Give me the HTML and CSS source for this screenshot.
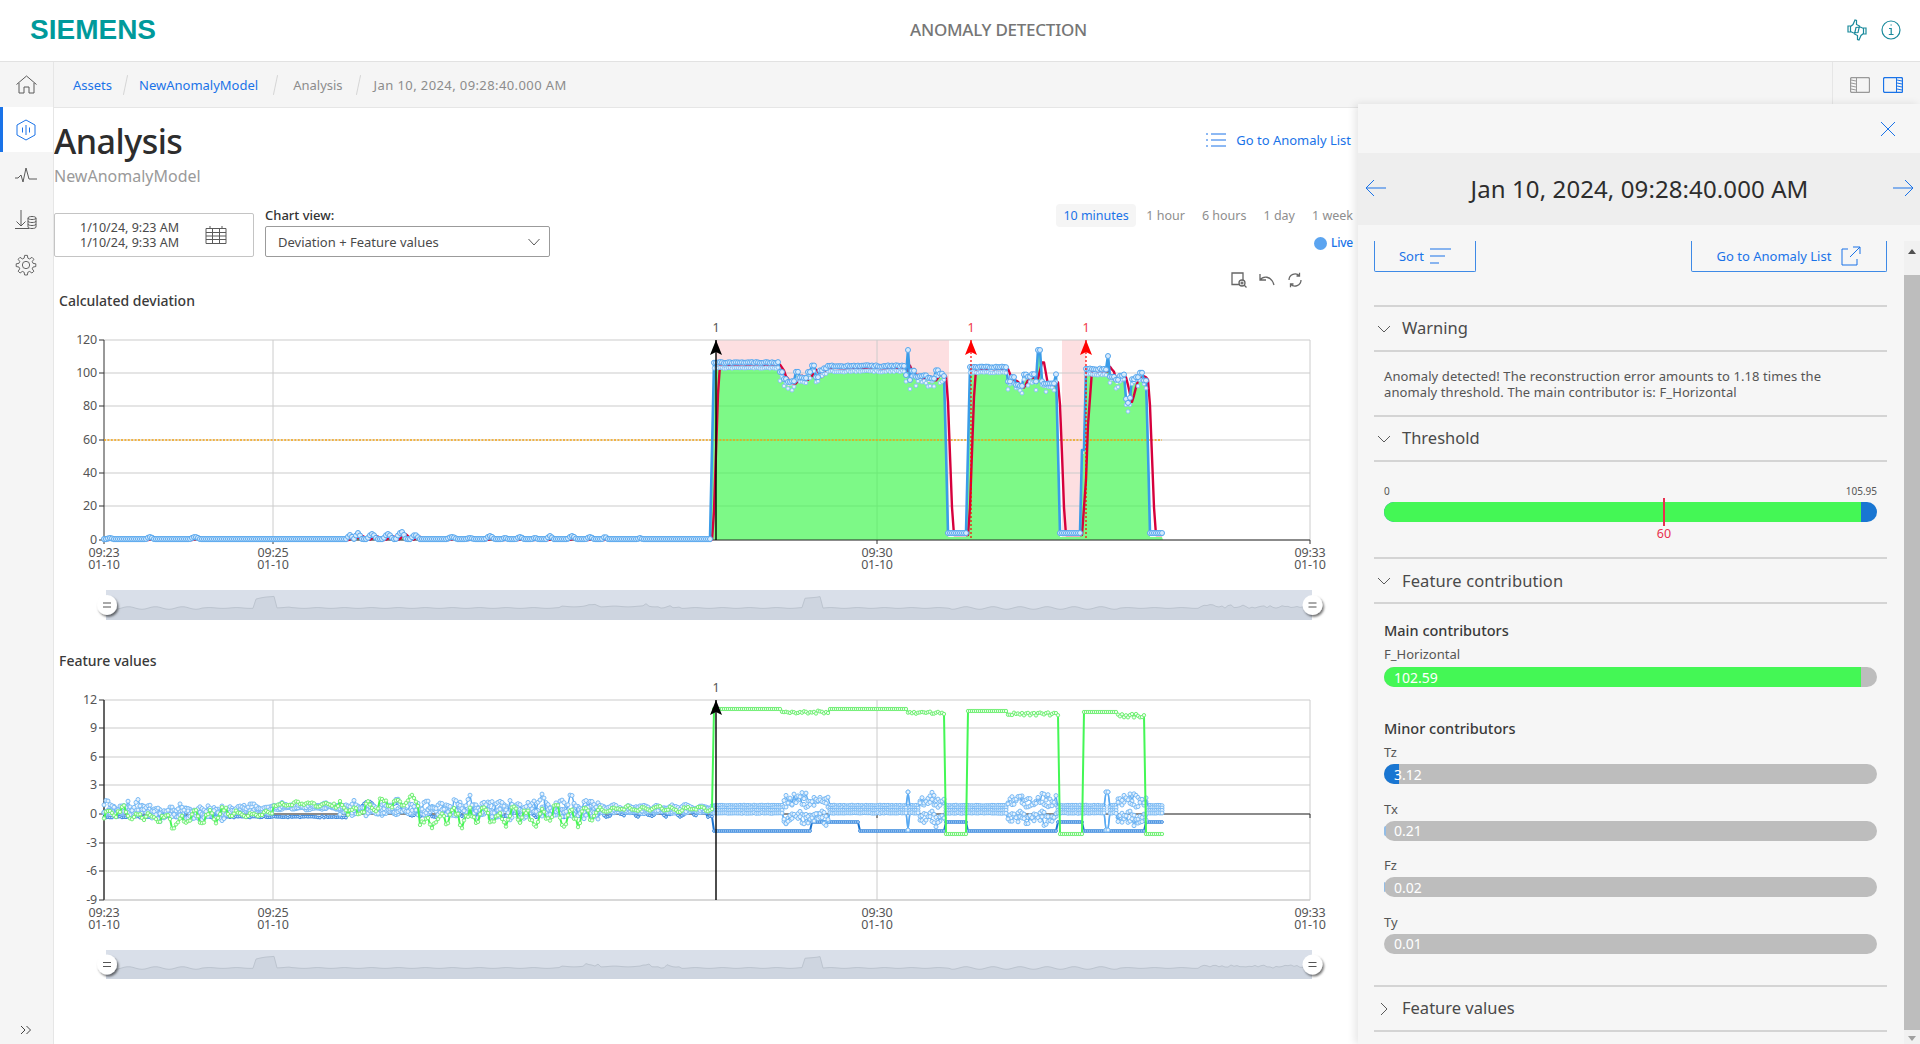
FILE: index.html
```html
<!DOCTYPE html>
<html lang="en">
<head>
<meta charset="utf-8">
<title>Anomaly Detection</title>
<link rel="stylesheet" href="styles.css">
</head>
<body>
<header class="topbar">
  <div class="logo">SIEMENS</div>
  <div class="app-title">ANOMALY DETECTION</div>
  <div class="top-icons">
    <svg class="ico-teal" width="20" height="22" viewBox="0 0 20 22"><path d="M1 7h2.500v6H1zM3.500 7.500 6 5.500 8 1l1.500.5v4l3 1.500L11 13.500l-4.500.5-3-1.500zM16.500 9H19v6h-2.500zM16.500 14.500 14 16.500 12 21l-1.500-.5v-4l-3-1.500L9 8.500l4.500-.5 3 1.500z"/></svg>
    <svg class="ico-teal" width="20" height="20" viewBox="0 0 20 20"><circle cx="10" cy="10" r="9"/><path d="M8 8.500h2.200v6M7.800 14.500h4.800M9.500 5h1.300"/></svg>
  </div>
</header>
<div class="shell">
  <nav class="sidebar">
    <a class="nav-item"><svg class="ico-gray" width="21" height="19" viewBox="0 0 21 19"><path d="M.5 9.500 10.500 1l10 8.500M3 8v10h5v-6h5v6h5V8"/></svg></a>
    <a class="nav-item active"><svg class="ico-blue" width="20" height="22" viewBox="0 0 20 22"><path d="M10 1l9 5v10l-9 5-9-5V6zM6.500 8.500v5M10 6v10M13.500 8.500v5"/></svg></a>
    <a class="nav-item"><svg class="ico-gray" width="22" height="16" viewBox="0 0 22 16"><path d="M0 11h3l3-3 2 7 3-14 3 11h8"/></svg></a>
    <a class="nav-item"><svg class="ico-gray" width="22" height="20" viewBox="0 0 22 20"><path d="M6 0v16M1.500 11.500 6 16l4.500-4.500M0 18.500h14M13 8c0-2 8-2 8 0v9c0 2-8 2-8 0zM13 8c0 2 8 2 8 0M13 11c0 2 8 2 8 0M13 14c0 2 8 2 8 0"/></svg></a>
    <a class="nav-item"><svg class="ico-gray" width="22" height="22" viewBox="0 0 24 24"><path d="M10.500 1.500h3l.5 3 2 .9 2.500-1.800 2.100 2.100-1.800 2.500.9 2 3 .5v3l-3 .5-.9 2 1.800 2.500-2.100 2.100-2.500-1.800-2 .9-.5 3h-3l-.5-3-2-.9-2.500 1.800-2.100-2.100 1.800-2.500-.9-2-3-.5v-3l3-.5.9-2-1.800-2.500 2.100-2.100 2.500 1.800 2-.9z"/><circle cx="12" cy="12" r="4"/></svg></a>
    <a class="nav-expand"><svg class="ico-dark" width="12" height="10" viewBox="0 0 12 10"><path d="M1 1l4 4-4 4M6.500 1l4 4-4 4"/></svg></a>
  </nav>
  <main class="main">
    <div class="breadcrumb">
      <a class="crumb link">Assets</a><span class="sep tight"></span>
      <a class="crumb link">NewAnomalyModel</a><span class="sep wide"></span>
      <span class="crumb">Analysis</span><span class="sep"></span>
      <span class="crumb date">Jan 10, 2024, 09:28:40.000 AM</span>
      <div class="layout-icons">
        <svg width="20" height="16" viewBox="0 0 20 16"><rect class="frame-gray" x=".5" y=".5" width="19" height="15" rx="1.500"/><path class="hatch-gray" d="M6.500 1v14M1 3l5 1M1 6l5 1M1 9l5 1M1 12l5 1"/></svg>
        <svg width="20" height="16" viewBox="0 0 20 16"><rect class="frame-blue" x=".5" y=".5" width="19" height="15" rx="1.500"/><path class="hatch-blue" d="M13.500 1v14M14 3l5 1M14 6l5 1M14 9l5 1M14 12l5 1"/></svg>
      </div>
    </div>
    <div class="content">
      <div class="title-row">
        <div>
          <h1>Analysis</h1>
          <div class="subtitle">NewAnomalyModel</div>
        </div>
        <a class="list-link">
          <svg class="ico-blue" width="20" height="14" viewBox="0 0 20 14"><path d="M5 1h15M5 7h15M5 13h15M0 1h2M0 7h2M0 13h2"/></svg>
          Go to Anomaly List
        </a>
      </div>
      <div class="controls">
        <div class="date-box">
          <div class="dates"><div>1/10/24, 9:23 AM</div><div>1/10/24, 9:33 AM</div></div>
          <svg class="ico-gray" width="22" height="20" viewBox="0 0 22 20"><path d="M1 3.500h20v15H1zM1 7.500h20M1 11h20M1 14.500h20M7.500 3.500v15M14.500 3.500v15M5 1v2.500M17 1v2.500"/></svg>
        </div>
        <div class="select-wrap">
          <label class="select-label">Chart view:</label>
          <div class="select"><span>Deviation + Feature values</span>
            <svg class="ico-gray" width="12" height="8" viewBox="0 0 12 8"><path d="M.5 1l5.500 6 5.500-6"/></svg>
          </div>
        </div>
        <div class="range-col">
          <div class="ranges">
            <span class="range on">10 minutes</span>
            <span class="range">1 hour</span>
            <span class="range">6 hours</span>
            <span class="range">1 day</span>
            <span class="range">1 week</span>
          </div>
          <div class="live"><i class="live-dot"></i>Live</div>
        </div>
      </div>
      <div class="chart-tools">
        <svg class="ico-tool" width="16" height="16" viewBox="0 0 16 16"><path d="M9 12.500H1V1h11v7"/><circle cx="11" cy="11" r="3"/><path d="M13 13l2.500 2.500M9.500 11h3M11 9.500v3"/></svg>
        <svg class="ico-tool" width="16" height="14" viewBox="0 0 16 14"><path d="M1 1v6h6M1 7c3-4 11-5 14 5"/></svg>
        <svg class="ico-tool" width="16" height="16" viewBox="0 0 16 16"><path d="M2 8a6 6 0 0 1 10.500-4M14 8a6 6 0 0 1-10.500 4M12.500 .8V4H9.500M3.500 15.200V12h3"/></svg>
      </div>
      <h3 class="chart-title">Calculated deviation</h3>
      <svg class="chart" id="chart-dev" width="1300" height="315" viewBox="54 315 1300 315"></svg>
      <h3 class="chart-title second">Feature values</h3>
      <svg class="chart" id="chart-feat" width="1300" height="315" viewBox="54 675 1300 315"></svg>
    </div>
  </main>
  <aside class="panel">
    <div class="panel-close"><svg class="ico-blue" width="16" height="16" viewBox="0 0 16 16"><path d="M1 1l14 14M15 1 1 15"/></svg></div>
    <div class="panel-title">
      <svg class="ico-blue" width="22" height="18" viewBox="0 0 22 18"><path d="M21 9H1M9 1 1 9l8 8"/></svg>
      <span>Jan 10, 2024, 09:28:40.000 AM</span>
      <svg class="ico-blue" width="22" height="18" viewBox="0 0 22 18"><path d="M1 9h20M13 1l8 8-8 8"/></svg>
    </div>
    <div class="panel-scroll">
      <div class="panel-body">
        <div class="panel-toolbar">
          <a class="btn btn-sort">Sort
            <svg class="ico-blue" width="21" height="16" viewBox="0 0 21 16"><path d="M0 1h21M0 8h15M0 15h9"/></svg>
          </a>
          <a class="btn btn-go">Go to Anomaly List
            <svg class="ico-blue" width="20" height="20" viewBox="0 0 20 20"><path d="M7 3H1v16h15v-6M9 11 19 1M12 1h7v7"/></svg>
          </a>
        </div>
        <div class="sec-head first"><svg class="ico-gray" width="14" height="8" viewBox="0 0 14 8"><path d="M1 1l6 6 6-6"/></svg>Warning</div>
        <p class="warning-text">Anomaly detected! The reconstruction error amounts to 1.18 times the anomaly threshold. The main contributor is: F_Horizontal</p>
        <div class="sec-head"><svg class="ico-gray" width="14" height="8" viewBox="0 0 14 8"><path d="M1 1l6 6 6-6"/></svg>Threshold</div>
        <div class="threshold">
          <div class="threshold-scale"><span>0</span><span>105.95</span></div>
          <div class="bar blue-bg">
            <div class="bar-fill green" style="width:96.8%"></div>
            <i class="tick"></i><span class="tick-label">60</span>
          </div>
        </div>
        <div class="sec-head feature-head"><svg class="ico-gray" width="14" height="8" viewBox="0 0 14 8"><path d="M1 1l6 6 6-6"/></svg>Feature contribution</div>
        <div class="contrib">
          <h4>Main contributors</h4>
          <div class="c-row main-row"><div class="c-label">F_Horizontal</div>
            <div class="bar"><div class="bar-fill green" style="width:96.8%"></div><span class="bar-value">102.59</span></div></div>
          <h4 class="minor">Minor contributors</h4>
          <div class="c-row"><div class="c-label">Tz</div>
            <div class="bar"><div class="bar-fill blue" style="width:3%"></div><span class="bar-value">3.12</span></div></div>
          <div class="c-row"><div class="c-label">Tx</div>
            <div class="bar"><div class="bar-fill faint" style="width:.4%"></div><span class="bar-value">0.21</span></div></div>
          <div class="c-row"><div class="c-label">Fz</div>
            <div class="bar"><div class="bar-fill faint" style="width:.3%"></div><span class="bar-value">0.02</span></div></div>
          <div class="c-row"><div class="c-label">Ty</div>
            <div class="bar"><span class="bar-value">0.01</span></div></div>
        </div>
        <div class="sec-head"><svg class="ico-gray" width="8" height="14" viewBox="0 0 8 14"><path d="M1 1l6 6-6 6"/></svg>Feature values</div>
      </div>
      <div class="scrollbar">
        <i class="arrow-up"></i>
        <div class="thumb"></div>
        <i class="arrow-down"></i>
      </div>
    </div>
  </aside>
</div>
<script src="charts.js"></script>
</body>
</html>
```
FILE: styles.css
```css
* { box-sizing: border-box; }
html, body { margin: 0; height: 100%; overflow: hidden; }
body { font-family: "Noto Sans", "Liberation Sans", sans-serif; color: #333; background: #fff; font-size: 12px; }
svg { flex: none; display: block; }
a { text-decoration: none; }

.ico-teal, .ico-gray, .ico-blue, .ico-dark, .ico-tool { fill: none; stroke-width: 1; }
.ico-teal { stroke: #1a8a9c; stroke-width: 1.200; }
.ico-gray { stroke: #5a5a5a; }
.ico-blue { stroke: #1a73e8; }
.ico-dark { stroke: #444; }
.ico-tool { stroke: #666; stroke-width: 1.300; }

.topbar { height: 62px; display: flex; align-items: center; position: relative; border-bottom: 1px solid #e2e2e2; background: #fff; padding: 0 19px 2px 30px; }
.logo { font-family: "Liberation Sans", sans-serif; font-weight: 700; font-size: 28px; color: #009a9b; line-height: 1; }
.app-title { flex: 1; text-align: center; font-size: 17px; font-weight: 500; color: #767676; margin-right: 6px; letter-spacing: -.25px; }
.top-icons { display: flex; gap: 14px; align-items: center; }

.shell { display: flex; height: 982px; position: relative; }
.sidebar { width: 54px; background: #f5f5f5; border-right: 1px solid #e6e6e6; position: relative; flex: none; }
.nav-item { height: 45px; display: flex; align-items: center; justify-content: center; border-left: 3px solid transparent; padding-right: 4px; }
.nav-item.active { background: #fff; border-left-color: #1a73e8; }
.nav-expand { position: absolute; left: 0; right: 2px; bottom: 9px; display: flex; justify-content: center; }

.main { flex: 1; min-width: 0; }
.breadcrumb { height: 46px; background: #f5f5f5; border-bottom: 1px solid #e6e6e6; display: flex; align-items: center; padding-left: 19px; font-size: 13px; position: relative; }
.crumb { color: #8c8c8c; }
.crumb.link { color: #1a73e8; }
.crumb.date { letter-spacing: .4px; }
.sep { width: 1px; height: 20px; background: #d6d6d6; margin: 0 15px; transform: rotate(12deg); }
.sep.tight { margin: 0 13px; }
.sep.wide { margin: 0 17px; }
.layout-icons { margin-left: auto; display: flex; gap: 13px; height: 100%; align-items: center; padding: 0 17px; border-left: 1px solid #e6e6e6; width: 88px; }
.frame-gray, .hatch-gray { fill: none; stroke: #999; }
.frame-blue, .hatch-blue { fill: none; stroke: #1a73e8; }
.frame-gray, .frame-blue { stroke-width: 1.300; }

.content { width: 1300px; padding-top: 13px; }
.title-row { display: flex; justify-content: space-between; align-items: flex-start; height: 84px; }
h1 { margin: 0; font-size: 34px; line-height: 40px; font-weight: 500; color: #2d2d2d; letter-spacing: -.5px; }
.subtitle { margin-top: 5px; font-size: 16px; line-height: 20px; color: #9a9a9a; }
.list-link { display: flex; align-items: center; gap: 10px; color: #1a73e8; font-size: 13px; line-height: 20px; margin-top: 9px; padding-right: 3px; }

.controls { display: flex; align-items: flex-end; height: 52px; }
.date-box { width: 200px; height: 44px; border: 1px solid #c4c4c4; border-radius: 2px; display: flex; align-items: center; justify-content: space-between; padding: 0 26px 0 25px; font-size: 12.500px; line-height: 15px; color: #4a4a4a; text-align: center; }
.select-wrap { margin-left: 11px; width: 285px; }
.select-label { display: block; font-size: 13px; line-height: 16px; color: #333; font-weight: 500; margin-bottom: 3px; }
.select { height: 31px; border: 1px solid #9b9b9b; border-radius: 2px; display: flex; align-items: center; justify-content: space-between; padding: 0 9px 0 12px; font-size: 13px; color: #4a4a4a; }
.range-col { margin-left: auto; align-self: flex-start; display: flex; flex-direction: column; align-items: flex-end; padding-right: 1px; }
.ranges { display: flex; font-size: 12.500px; align-items: center; height: 23px; margin-top: -1px; }
.range { padding: 0 8.500px; color: #8e8e8e; height: 23px; line-height: 23px; border-radius: 4px; }
.range:last-child { padding-right: 0; }
.range.on { color: #1a73e8; background: #f5f5f5; padding: 0 7px; margin-right: 2px; }
.live { display: flex; align-items: center; gap: 4px; color: #1a73e8; font-size: 12px; line-height: 16px; margin-top: 8px; font-weight: 500; letter-spacing: -.2px; }
.live-dot { width: 13px; height: 13px; border-radius: 50%; background: #5ba4f0; }
.chart-tools { display: flex; gap: 12px; justify-content: flex-end; align-items: center; height: 16px; margin-top: 15px; padding-right: 51px; }

.chart-title { margin: 3px 0 4px 5px; font-size: 14px; line-height: 20px; font-weight: 500; color: #3a3a3a; }
.chart-title.second { margin-top: 21px; }
.chart text { font-family: "Noto Sans", "Liberation Sans", sans-serif; font-size: 12.500px; fill: #555; letter-spacing: -.2px; }
.chart text.red { fill: #f03a4a; }

.panel { position: absolute; left: 1358px; right: 0; top: 42px; bottom: 0; background: #f6f6f6; box-shadow: -3px 0 8px rgba(0,0,0,.1); display: flex; flex-direction: column; }
.panel-close { height: 49px; display: flex; justify-content: flex-end; align-items: center; padding-right: 24px; }
.panel-title { height: 72px; background: #eeeeee; display: flex; align-items: center; justify-content: space-between; padding: 0 6px 2px 7px; font-size: 24px; color: #2d2d2d; letter-spacing: .1px; }
.panel-scroll { flex: 1; display: flex; margin-top: 16px; min-height: 0; }
.panel-body { flex: 1; padding: 0 17px 0 16px; min-width: 0; }
.panel-toolbar { display: flex; justify-content: space-between; height: 31px; margin-bottom: 33px; }
.btn { display: flex; align-items: center; justify-content: center; gap: 10px; height: 31px; border: 1px solid #3e8ae6; border-top: 0; border-radius: 0 0 2px 2px; color: #1a73e8; font-size: 13px; }
.btn-sort { width: 102px; gap: 6px; padding-left: 0; }
.btn-go { width: 196px; }
.sec-head { height: 47px; border-top: 2px solid #d4d4d4; border-bottom: 2px solid #d4d4d4; display: flex; align-items: center; font-size: 16.500px; color: #4a4a4a; position: relative; padding: 0 0 2px 28px; }
.sec-head.feature-head { padding-bottom: 0; letter-spacing: .1px; }
.sec-head svg { position: absolute; left: 3px; top: 18px; }
.sec-head svg[width="8"] { left: 6px; top: 15px; }
.warning-text { margin: 0; padding: 16px 40px 15px 10px; font-size: 13px; line-height: 16px; color: #555; height: 63px; letter-spacing: .1px; }
.threshold { padding: 23px 10px 0; height: 95px; }
.threshold-scale { display: flex; justify-content: space-between; font-size: 10px; line-height: 12px; color: #555; margin-bottom: 5px; }
.bar { height: 20px; border-radius: 10px; background: #bdbdbd; position: relative; display: flex; align-items: center; overflow: visible; }
.bar.blue-bg { background: #1976d2; }
.bar-fill { position: absolute; left: 0; top: 0; bottom: 0; border-radius: 10px 0 0 10px; }
.bar-fill.green { background: #44f755; }
.bar-fill.blue { background: #1976d2; }
.bar-fill.faint { background: #93bde6; border-radius: 2px 0 0 2px; top: 5px; bottom: 5px; }
.bar-value { position: relative; margin-left: 10px; color: #fff; font-size: 14px; }
.tick { position: absolute; left: 279px; top: -4px; width: 2px; height: 28px; background: #e8304f; }
.tick-label { position: absolute; left: 270px; top: 24px; width: 20px; text-align: center; font-size: 12.500px; line-height: 16px; color: #e8304f; }
.contrib { padding: 16px 10px 0; height: 381px; }
h4 { margin: 0; font-size: 14.500px; line-height: 20px; font-weight: 500; color: #3a3a3a; }
h4.minor { margin-top: 31px; }
.c-label { font-size: 13px; line-height: 16px; color: #555; margin-bottom: 4px; }
.main-row .c-label { margin-bottom: 5px; }
.c-row { margin-top: 16.600px; }
h4 + .c-row { margin-top: 6px; }
.scrollbar { width: 16px; position: relative; background: #f1f1f1; }
.thumb { position: absolute; left: 0; right: 0; top: 34px; bottom: 14px; background: #bdbdbd; }
.arrow-up, .arrow-down { position: absolute; left: 4px; width: 0; height: 0; border-left: 4px solid transparent; border-right: 4px solid transparent; }
.arrow-up { top: 8px; border-bottom: 5px solid #505050; }
.arrow-down { bottom: 3px; border-top: 5px solid #a0a0a0; }
```
FILE: charts.js
```js
(function () {
  var NS = 'http://www.w3.org/2000/svg';
  var seed = 4711;
  function rnd() { seed = (seed * 16807) % 2147483647; return seed / 2147483647; }
  function noise() { return rnd() * 2 - 1; }
  function add(p, name, attrs, text) {
    var e = document.createElementNS(NS, name);
    for (var k in attrs) e.setAttribute(k, attrs[k]);
    if (text !== undefined) e.textContent = text;
    p.appendChild(e);
    return e;
  }
  var GRID = '#cccccc', AXIS = '#333333';
  var X0 = 104, X1 = 1310, END = 1163;

  function frame(svg, c) {
    c.yTicks.forEach(function (t) {
      add(svg, 'line', { x1: X0, x2: X1, y1: t[1], y2: t[1], stroke: GRID, 'stroke-width': 1.2 });
      add(svg, 'line', { x1: X0 - 5, x2: X0, y1: t[1], y2: t[1], stroke: AXIS });
      add(svg, 'text', { x: X0 - 7, y: t[1] + 4, 'text-anchor': 'end' }, t[0]);
    });
    [273, 877, X1].forEach(function (x) {
      add(svg, 'line', { x1: x, x2: x, y1: c.top, y2: c.bottom, stroke: GRID });
    });
    [[104, '09:23'], [273, '09:25'], [877, '09:30'], [1310, '09:33']].forEach(function (l) {
      add(svg, 'text', { x: l[0], y: c.bottom + c.labelGap, 'text-anchor': 'middle' }, l[1]);
      add(svg, 'text', { x: l[0], y: c.bottom + c.labelGap + 12, 'text-anchor': 'middle' }, '01-10');
    });
  }
  function axes(svg, c) {
    add(svg, 'line', { x1: X0, x2: X0, y1: c.top, y2: c.bottom, stroke: AXIS });
    add(svg, 'line', { x1: X0, x2: X1, y1: c.axisY, y2: c.axisY, stroke: AXIS, 'stroke-width': 1.2 });
    [104, 273, 877, 1310].forEach(function (x) {
      add(svg, 'line', { x1: x, x2: x, y1: c.axisY, y2: c.axisY + 4, stroke: AXIS });
    });
  }
  function pts(a) { return a.map(function (p) { return p[0] + ',' + p[1].toFixed(1); }).join(' '); }
  function line(svg, a, color, w) {
    add(svg, 'polyline', { points: pts(a), fill: 'none', stroke: color, 'stroke-width': w, 'stroke-linejoin': 'round' });
  }
  function markers(svg, a, stroke, fill, r) {
    var g = add(svg, 'g', { fill: fill, stroke: stroke, 'stroke-width': 1 });
    a.forEach(function (p) { add(g, 'circle', { cx: p[0], cy: p[1].toFixed(1), r: r }); });
  }
  function arrow(svg, x, top, color, bottom, dashed, labelY) {
    add(svg, 'line', { x1: x, x2: x, y1: top, y2: bottom, stroke: color, 'stroke-width': dashed ? 1.2 : 1.4, 'stroke-dasharray': dashed ? '2 2' : 'none' });
    add(svg, 'path', { d: 'M' + x + ' ' + top + 'l6 15-6-3-6 3z', fill: color });
    var t = add(svg, 'text', { x: x, y: labelY, 'text-anchor': 'middle' }, '1');
    if (dashed) t.setAttribute('class', 'red');
  }
  function brush(svg, top, h) {
    add(svg, 'rect', { x: 106, y: top, width: 1206, height: h, fill: '#d9dfe9' });
    var up = [], x;
    for (x = 106; x <= 1312; x += 3) {
      var b = top + 18;
      b += Math.sin(x / 4.3) * (x > 950 && x < 1120 || x < 200 ? 1.3 : 0.4);
      if (x >= 256 && x <= 276) b -= 9 + (x - 256) * 0.16;
      if (x >= 803 && x <= 822) b -= 9 + (x - 803) * 0.16;
      if (x > 276 && x < 290) b -= 2 * (x % 9 === 0 ? 1 : 0) + 0.5;
      if (x > 560 && x < 660) b -= 1.5;
      if ((x > 585 && x < 600) || (x > 640 && x < 650) || (x > 665 && x < 680) || (x > 1200)) b -= 3 * rnd();
      up.push([x, b]);
    }
    var d = pts(up) + ' 1312,' + (top + h) + ' 106,' + (top + h);
    add(svg, 'polygon', { points: d, fill: '#ced5e0' });
    line(svg, up, '#bcc4cf', 1);
    [107, 1312.5].forEach(function (x) {
      add(svg, 'circle', { cx: x, cy: top + h / 2, r: 10, fill: '#fff', filter: 'url(#handle-shadow)' });
      add(svg, 'path', { d: 'M' + (x - 4) + ' ' + (top + h / 2 - 2) + 'h8M' + (x - 4) + ' ' + (top + h / 2 + 2) + 'h8', stroke: '#555', 'stroke-width': 1.2 });
    });
  }
  function shadowDef(svg) {
    var defs = add(svg, 'defs', {});
    var f = add(defs, 'filter', { id: 'handle-shadow', x: '-40%', y: '-40%', width: '190%', height: '190%' });
    add(f, 'feDropShadow', { dx: 1.5, dy: 2, stdDeviation: 1.2, 'flood-color': '#000', 'flood-opacity': 0.55 });
  }

  /* ---------- deviation chart ---------- */
  function bumpsAt(x) {
    var list = [[350, 5, 3], [358, 7, 3], [372, 6, 4], [388, 6, 4], [400, 7, 3], [402, 8, 3], [415, 5, 4],
      [110, 2, 4], [150, 3, 4], [195, 3, 5], [452, 3, 5], [470, 2, 5], [490, 4, 4], [505, 2, 4], [520, 3, 4], [535, 2, 4], [550, 4, 3], [572, 4, 4], [590, 3, 4], [605, 3, 3], [640, 2, 3]];
    var v = 1;
    list.forEach(function (b) { var d = (x - b[0]) / b[2]; v = Math.max(v, b[1] * Math.exp(-d * d)); });
    return v;
  }
  var jag = {};
  function jitter(x, span) {
    if (jag[x] === undefined) jag[x] = noise();
    return jag[x] * span;
  }
  function dev(x) {
    if (x < 712) return 540 - bumpsAt(x);
    if (x < 714) return 450;
    if (x < 780) return 362.5 + jitter(x, 0.5);
    if (x < 832) return 373 + jitter(x - x % 4, 9);
    if (x < 905) return 366 + jitter(x, 0.7);
    if (x < 945) {
      if (Math.abs(x - 908) < 2) return 350;
      return 376 + jitter(x - x % 4, 7);
    }
    if (x < 947) return 450;
    if (x < 967) return 533;
    if (x < 969) return 450;
    if (x < 1008) return 367 + jitter(x, 0.6);
    if (x < 1058) {
      if (Math.abs(x - 1039) < 3) return 350;
      return 380 + jitter(x - x % 4, 6);
    }
    if (x < 1060) return 450;
    if (x < 1082) return 533;
    if (x < 1085) return 450;
    if (x < 1108) return 369 + jitter(x, 0.7);
    if (x < 1147) {
      if (Math.abs(x - 1108) < 2) return 356;
      if (x > 1124 && x < 1132) return 396 + jitter(x, 7);
      return 377 + jitter(x - x % 4, 5);
    }
    if (x < 1150) return 450;
    return 533;
  }
  function drawDeviation() {
    var svg = document.getElementById('chart-dev');
    shadowDef(svg);
    var c = { top: 340, bottom: 540, axisY: 540, labelGap: 17,
      yTicks: [['120', 340], ['100', 373], ['80', 406], ['60', 440], ['40', 473], ['20', 506], ['0', 540]] };
    [[716, 949], [1062, 1086]].forEach(function (b) {
      add(svg, 'rect', { x: b[0], y: c.top, width: b[1] - b[0], height: c.bottom - c.top, fill: '#fddfe1' });
    });
    var blue = [], red = [], low = [], area = [], x;
    for (x = 104; x <= END; x += 2) {
      var v = dev(x);
      blue.push([x, v]);
      var s = 0, n = 0;
      for (var k = 2; k <= 6; k += 2) { s += dev(x - k); n++; }
      red.push([x, s / n + (x > 712 ? 2 : 1)]);
      low.push([x, v < 500 && v > 360 ? v + 5.5 + noise() * (v > 371 ? 4 : 0) : v + 1]);
      area.push([x, Math.min(v + 4, 540)]);
    }
    var poly = pts(area) + ' ' + END + ',540 104,540';
    add(svg, 'polygon', { points: poly, fill: '#fff' });
    frame(svg, c);
    add(svg, 'polygon', { points: poly, fill: '#46f654', 'fill-opacity': 0.7 });
    axes(svg, c);
    add(svg, 'line', { x1: 104, x2: 1162, y1: 440, y2: 440, stroke: '#f5a20f', 'stroke-width': 1.6, 'stroke-dasharray': '2 1.4' });
    line(svg, red, '#d6003c', 2.4);
    line(svg, blue, '#3a9ce8', 2.6);
    var mk = function (a) { return a.filter(function (p) { return p[1] < 445 || p[1] > 500; }); };
    markers(svg, mk(low), '#8cc4f5', '#e3f1fd', 1.8);
    markers(svg, mk(blue), '#55a6ee', '#d6eafc', 2.5);
    arrow(svg, 716, 340, '#000', 540, false, 332);
    arrow(svg, 971, 340, '#f00', 540, true, 332);
    arrow(svg, 1086, 340, '#f00', 540, true, 332);
    brush(svg, 590, 30);
  }

  /* ---------- feature chart ---------- */
  function burst(x) {
    var r = [[783, 829], [920, 945], [1008, 1057], [1118, 1147]];
    for (var i = 0; i < r.length; i++) if (x >= r[i][0] && x <= r[i][1]) return 1;
    return 0;
  }
  function greenBias(x) {
    if (x < 150) return 2;
    if (x < 205) return 8;
    if (x < 273) return 2;
    if (x < 335) return -8;
    if (x < 380) return -3;
    if (x < 420) return -10;
    if (x < 450) return 9;
    if (x < 600) return 4;
    return -3;
  }
  function envelope(x) {
    if (x < 230) return 8;
    if (x < 273) return 4;
    if (x < 340) return 2.5;
    if (x < 450) return 7;
    if (x < 600) return 11;
    return 3;
  }
  function wave(x, p1, p2) {
    return Math.sin(x / 2.3 + p1) * 0.55 + Math.sin(x / 5.7 + p2) * 0.3 + noise() * 0.35;
  }
  function drawFeatures() {
    var svg = document.getElementById('chart-feat');
    var c = { top: 700, bottom: 900, axisY: 814, labelGap: 17,
      yTicks: [['12', 700], ['9', 728], ['6', 757], ['3', 785], ['0', 814], ['-3', 843], ['-6', 871], ['-9', 900]] };
    frame(svg, c);
    axes(svg, c);
    add(svg, 'line', { x1: X0, x2: X1, y1: 900, y2: 900, stroke: GRID, 'stroke-width': 1.2 });
    add(svg, 'line', { x1: X0, x2: X0, y1: 700, y2: 900, stroke: AXIS });

    var dark = [], x;
    for (x = 104; x <= END; x += 2) {
      var y;
      if (x < 348) y = 817 + noise() * 0.6;
      else if (x < 420) y = 806 + Math.sin(x / 4.6) * 6 + (x - 348) * 0.06;
      else if (x < 713) y = 814 + wave(x, 1, 2) * 4;
      else if (x < 811) y = 831;
      else if (x < 859) y = 822;
      else if (x < 945) y = 831;
      else if (x < 968) y = 822;
      else if (x < 1058) y = 831;
      else if (x < 1083) y = 822;
      else if (x < 1146) y = 831;
      else y = 822;
      dark.push([x, y]);
    }
    line(svg, dark, '#1b74d0', 2);
    markers(svg, dark, '#3d8be0', '#cfe4fa', 1.4);

    var bases = [805.5, 808, 810.5, 813];
    bases.forEach(function (base, i) {
      var a = [], x, p1 = rnd() * 6, p2 = rnd() * 6;
      for (x = 104; x <= END; x += 2) {
        var y;
        if (x < 713) {
          y = 812 - i * 1.5 + wave(x, p1, p2) * envelope(x) * (0.5 + i * 0.2);
          if (x < 230 && x > 150) y += i * 2;
          if (x > 273 && x < 340) y -= 2 + (i === 0 ? 4 : 0);
        } else {
          var bead = Math.abs(Math.sin(x / 7 + i));
          var swing = burst(x) * (i < 2 ? -1 : 1) * bead * (4 + rnd() * 11);
          y = base + noise() * 0.3 + swing;
          if (Math.abs(x - 908) < 2 || Math.abs(x - 1107) < 2) y = i < 2 ? 792 : 830;
        }
        a.push([x, y]);
      }
      line(svg, a, '#5aaaf2', 1.4);
      markers(svg, a, '#79baf5', '#e6f2fd', 2);
    });

    var green = [], p3 = rnd() * 6, p4 = rnd() * 6;
    for (x = 104; x <= END; x += 2) {
      var g;
      if (x < 713) g = 812 + greenBias(x) + wave(x, p3, p4) * envelope(x) * 1.1;
      else if (x < 782) g = 709;
      else if (x < 830) g = 712 + noise() * 1.5;
      else if (x < 908) g = 709;
      else if (x < 946) g = 713 + noise() * 1.5;
      else if (x < 968) g = 834;
      else if (x < 1008) g = 711;
      else if (x < 1059) g = 714 + noise() * 1.5;
      else if (x < 1083) g = 834;
      else if (x < 1118) g = 712;
      else if (x < 1146) g = 716 + noise() * 2;
      else g = 834;
      green.push([x, g]);
    }
    line(svg, green, '#44f755', 2);
    markers(svg, green, '#74f078', '#eafdea', 1.7);

    arrow(svg, 716, 700, '#000', 900, false, 692);
    brush(svg, 950, 29);
  }
  drawDeviation();
  drawFeatures();
})();
```
